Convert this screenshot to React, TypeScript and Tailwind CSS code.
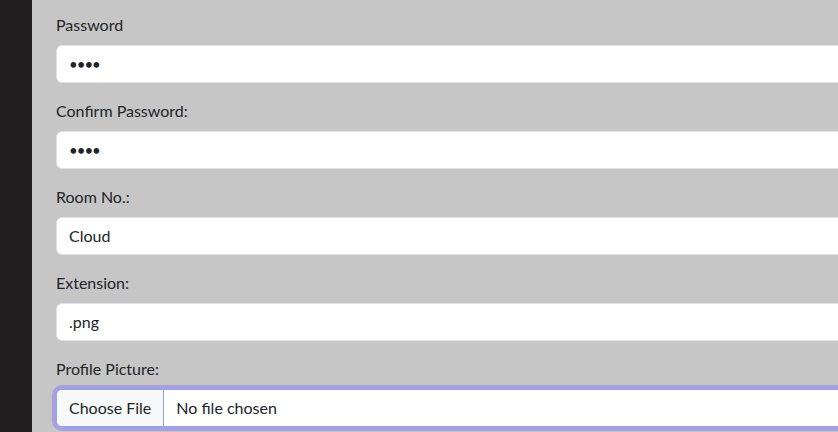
const fields = [
  { label: 'Password', value: '••••' },
  { label: 'Confirm Password:', value: '••••' },
  { label: 'Room No.:', value: 'Cloud' },
  { label: 'Extension:', value: '.png' },
];

export default function App() {
  return (
    <div className="flex h-[432px] w-[838px] overflow-hidden bg-[#c6c6c6] font-['Lato','Noto_Sans',sans-serif] text-[16px] text-[#212529]">
      {/* sidebar */}
      <div className="w-8 shrink-0 bg-[#1f1d1d]" />

      <form className="flex min-w-0 flex-1 flex-col pl-6 pt-[13px]">
        {fields.map((f) => (
          <div key={f.label} className="mb-4">
            <label className="mb-2 block leading-6">{f.label}</label>
            <div className="flex h-[38px] w-[800px] items-center rounded-md border border-[#dee2e6] bg-white px-3">
              <span className={f.value.startsWith('•') ? 'text-[15px] tracking-[-1px]' : ''}>{f.value}</span>
            </div>
          </div>
        ))}

        <div>
          <label className="mb-2 block leading-6">Profile Picture:</label>
          <div className="flex h-[38px] w-[800px] items-stretch overflow-hidden rounded-md border border-[#8ea3f2] bg-white shadow-[0_0_0_4px_#a99ee0]">
            <span className="flex items-center border-r border-[#8ea3f2] bg-[#f8f9fa] px-3">Choose File</span>
            <span className="flex items-center px-3">No file chosen</span>
          </div>
        </div>
      </form>
    </div>
  );
}
